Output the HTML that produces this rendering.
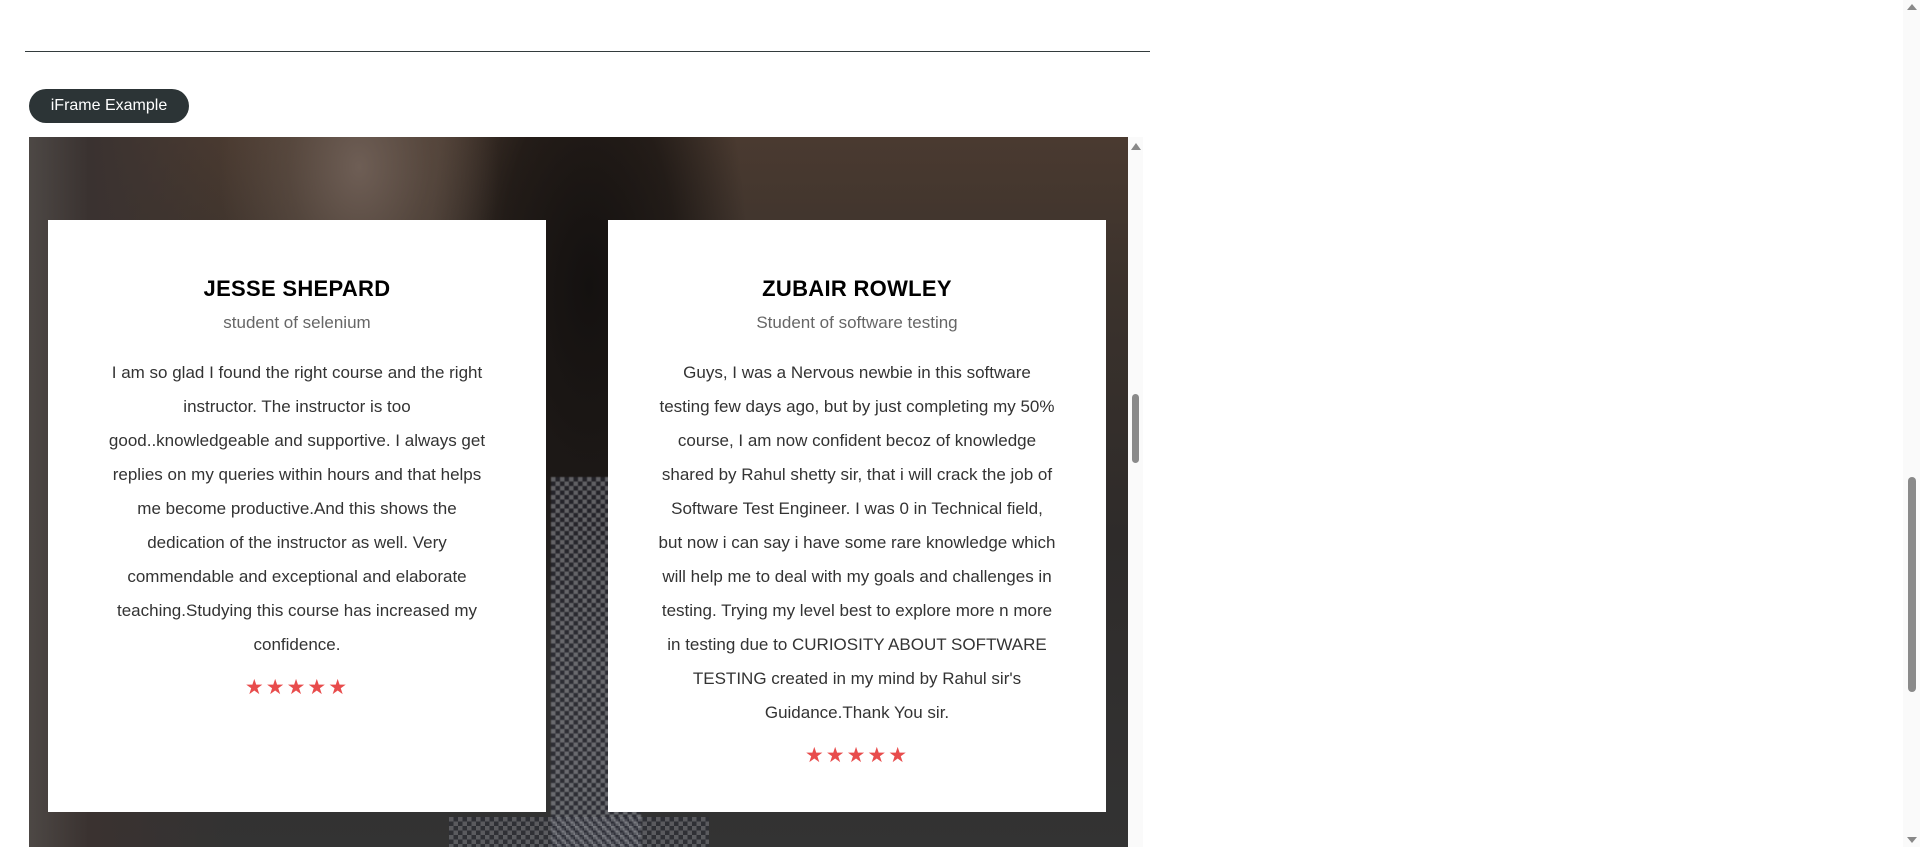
<!DOCTYPE html>
<html><head><style>
html,body{margin:0;padding:0;width:1920px;height:847px;overflow:hidden;background:#fff;font-family:"Liberation Sans",sans-serif}
.hr{position:absolute;left:25px;top:51px;width:1125px;height:1px;background:#333b3d}
.btn{position:absolute;left:29px;top:89px;width:160px;height:34px;border-radius:17px;background:#2c3436;color:#fff;font-size:16px;line-height:34px;text-align:center}
.frame{position:absolute;left:29px;top:137px;width:1099px;height:710px;overflow:hidden;
background:
radial-gradient(ellipse 140px 200px at 330px 30px,#6e5e55 0%,rgba(100,85,75,0.5) 50%,transparent 100%),
radial-gradient(ellipse 160px 380px at 560px 150px,#141110 0%,rgba(20,16,14,.7) 55%,transparent 100%),
linear-gradient(90deg,#4d4845 0px,#3a3230 60px,transparent 200px),
linear-gradient(180deg,#4a3a30 0px,#3b322c 150px,#2e2b2a 400px,#333 710px)}
.shirt{position:absolute;left:522px;top:340px;width:90px;height:370px;
background:repeating-conic-gradient(#2a2c38 0 25%,#9a9ca4 0 50%) 0 0/9px 9px;opacity:.55;filter:blur(0.6px)}
.shirt2{position:absolute;left:420px;top:680px;width:260px;height:40px;background:repeating-conic-gradient(#2a2c38 0 25%,#8a8c94 0 50%) 0 0/9px 9px;opacity:.45}
.fsb{position:absolute;left:1128px;top:137px;width:15px;height:710px;background:#fafafa}
.fsb .up{position:absolute;left:3px;top:6px;width:0;height:0;border-left:5px solid transparent;border-right:5px solid transparent;border-bottom:7px solid #888}
.fsb .th{position:absolute;left:4px;top:257px;width:7px;height:69px;background:#8a8a8a;border-radius:4px}
.card{position:absolute;top:83px;width:498px;height:592px;background:#fff;text-align:center}
.card h3{margin:0;position:absolute;top:56px;width:100%;font-size:22px;font-weight:bold;color:#000;letter-spacing:0.3px}
.card .sub{position:absolute;top:93px;width:100%;font-size:17px;color:#666}
.card .txt{position:absolute;top:136px;width:100%;font-size:17px;line-height:34px;color:#333;white-space:nowrap}
.stars{color:#e84c4c;font-size:21px;letter-spacing:2px;margin-top:9px;line-height:34px}
.psb{position:absolute;left:1903px;top:0;width:17px;height:847px;background:#fafafa}
.psb .up{position:absolute;left:4px;top:4px;border-left:5px solid transparent;border-right:5px solid transparent;border-bottom:6px solid #888}
.psb .dn{position:absolute;left:4px;bottom:4px;border-left:5px solid transparent;border-right:5px solid transparent;border-top:6px solid #888}
.psb .th{position:absolute;left:5px;top:477px;width:8px;height:215px;background:#8a8a8a;border-radius:4px}
</style></head><body>
<div class="hr"></div>
<div class="btn">iFrame Example</div>
<div class="frame">
<div class="shirt"></div><div class="shirt2"></div>
<div class="card" style="left:19px">
<h3>JESSE SHEPARD</h3>
<div class="sub">student of selenium</div>
<div class="txt">I am so glad I found the right course and the right<br>instructor. The instructor is too<br>good..knowledgeable and supportive. I always get<br>replies on my queries within hours and that helps<br>me become productive.And this shows the<br>dedication of the instructor as well. Very<br>commendable and exceptional and elaborate<br>teaching.Studying this course has increased my<br>confidence.<div class="stars">★★★★★</div></div>
</div>
<div class="card" style="left:579px">
<h3>ZUBAIR ROWLEY</h3>
<div class="sub">Student of software testing</div>
<div class="txt">Guys, I was a Nervous newbie in this software<br>testing few days ago, but by just completing my 50%<br>course, I am now confident becoz of knowledge<br>shared by Rahul shetty sir, that i will crack the job of<br>Software Test Engineer. I was 0 in Technical field,<br>but now i can say i have some rare knowledge which<br>will help me to deal with my goals and challenges in<br>testing. Trying my level best to explore more n more<br>in testing due to CURIOSITY ABOUT SOFTWARE<br>TESTING created in my mind by Rahul sir's<br>Guidance.Thank You sir.<div class="stars">★★★★★</div></div>
</div>
</div>
<div class="fsb"><div class="up"></div><div class="th"></div></div>
<div class="psb"><div class="up"></div><div class="th"></div><div class="dn"></div></div>
</body></html>
